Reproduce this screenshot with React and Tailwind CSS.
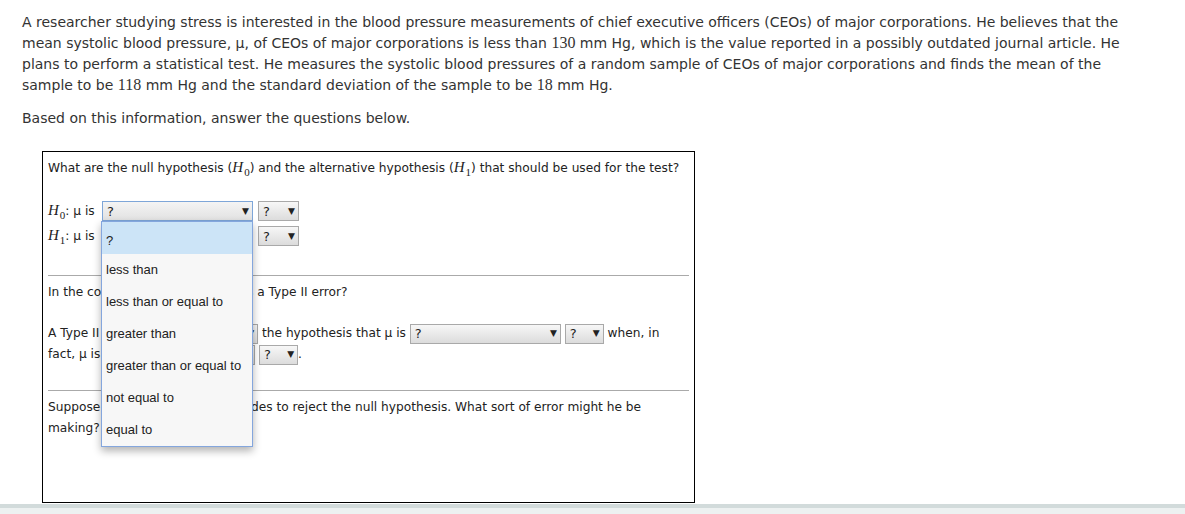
import React from 'react'

const sans = { fontFamily: '"DejaVu Sans", Verdana, sans-serif' }

function H({ n }) {
  return (
    <span className="whitespace-nowrap leading-none">
      <span className="italic text-[15px] font-['Liberation_Serif',serif]">H</span>
      <span className="text-[11px] font-['Liberation_Serif',serif] relative top-[4px] ml-[1px]">{n}</span>
    </span>
  )
}

function Num({ children }) {
  return <span className="text-[16px] leading-none font-['Liberation_Serif',serif]">{children}</span>
}

function Select({ w = 'w-[40px]', focused = false }) {
  return (
    <span
      className={`inline-flex items-center justify-between align-middle h-[20px] ${w} border ${focused ? 'border-[#7ea6d8] bg-gradient-to-b from-[#f4f4f4] to-[#e2e2e2]' : 'border-[#a9a9a9] bg-gradient-to-b from-[#f7f7f7] to-[#dcdcdc]'} pl-[4px] pr-[3px] text-[13px] text-[#222] leading-none`}
    >
      <span>?</span>
      <span className="text-[9px]">▼</span>
    </span>
  )
}

const options = ['?', 'less than', 'less than or equal to', 'greater than', 'greater than or equal to', 'not equal to', 'equal to']

export default function App() {
  return (
    <div className="relative h-[514px] w-[1185px] bg-white text-[#333] flex flex-col" style={sans}>
      <div className="pl-[22px] pt-[12px] text-[14px] leading-[21px]">
        <p>
          <span className="block whitespace-nowrap">A researcher studying stress is interested in the blood pressure measurements of chief executive officers (CEOs) of major corporations. He believes that the</span>
          <span className="block whitespace-nowrap">mean systolic blood pressure, μ, of CEOs of major corporations is less than <Num>130</Num> mm Hg, which is the value reported in a possibly outdated journal article. He</span>
          <span className="block whitespace-nowrap">plans to perform a statistical test. He measures the systolic blood pressures of a random sample of CEOs of major corporations and finds the mean of the</span>
          <span className="block whitespace-nowrap">sample to be <Num>118</Num> mm Hg and the standard deviation of the sample to be <Num>18</Num> mm Hg.</span>
        </p>
        <p className="mt-[12px]">Based on this information, answer the questions below.</p>
      </div>

      <div className="ml-[42px] mt-[22px] w-[653px] h-[352px] shrink-0 border border-black text-[12.2px] text-[#222] px-[5px]">
        <div className="pt-[6px] leading-[20px] whitespace-nowrap">
          What are the null hypothesis (<H n="0" />) and the alternative hypothesis (<H n="1" />) that should be used for the test?
        </div>
        <div className="mt-[23px] flex items-center h-[20px] gap-[5px]">
          <span className="whitespace-nowrap w-[49px]"><H n="0" />: μ is</span>
          <Select w="w-[151px]" focused />
          <Select w="w-[41px]" />
        </div>
        <div className="mt-[5px] flex items-center h-[20px] gap-[5px]">
          <span className="whitespace-nowrap w-[49px]"><H n="1" />: μ is</span>
          <Select w="w-[151px]" />
          <Select w="w-[41px]" />
        </div>
        <hr className="mt-[29px] border-0 border-t border-[#aaa]" />
        <p className="mt-[6px] leading-[20px]">In the context of this test, what is a Type II error?</p>
        <p className="mt-[21px] leading-[21px]">
          A Type II error is <Select w="w-[108px]" /> the hypothesis that μ is <Select w="w-[151px]" /> <Select w="w-[39px]" /> when, in
          <br />
          fact, μ is <Select w="w-[151px]" /> <Select w="w-[39px]" />.
        </p>
        <hr className="mt-[25px] border-0 border-t border-[#aaa]" />
        <p className="mt-[6px] leading-[21px]">
          Suppose that the researcher decides to reject the null hypothesis. What sort of error might he be
          <br />
          making? <Select w="w-[97px]" />
        </p>
      </div>

      <div className="mt-[1px] h-[4px] bg-[#d2dbdb]" />
      <div className="flex-1 bg-[#edf1f1]" />

      <div className="absolute left-[101px] top-[221px] w-[152px] border border-[#84a6dd] bg-[#f7f7f7] shadow-[0_4px_8px_rgba(0,0,0,0.3)] font-['Liberation_Sans',Arial,sans-serif] text-[13px] text-[#222]">
        {options.map((o, i) => (
          <div key={o} className={`h-[32px] flex items-center pl-[4px] ${i === 0 ? 'bg-[#cce4f7] pt-[6px]' : ''}`}>
            {o}
          </div>
        ))}
      </div>
    </div>
  )
}
